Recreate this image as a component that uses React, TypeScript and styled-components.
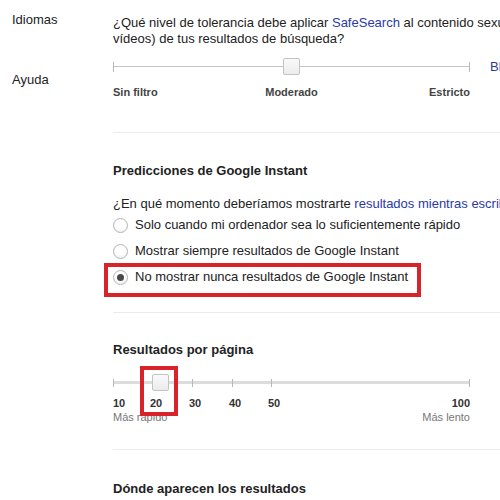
import React from "react";
import styled, { createGlobalStyle } from "styled-components";

const GlobalStyle = createGlobalStyle`
  html, body {
    margin: 0;
    padding: 0;
    background: #ffffff;
    overflow: hidden;
  }
  body {
    font-family: "Liberation Sans", Arial, sans-serif;
    font-size: 13px;
    color: #222222;
  }
`;

const Page = styled.div`
  display: flex;
  align-items: flex-start;
  width: 700px;
`;

const Nav = styled.nav`
  flex: 0 0 113px;
  box-sizing: border-box;
  padding: 12px 0 0 12px;
  display: flex;
  flex-direction: column;
  gap: 44px;
`;

const NavItem = styled.div`
  line-height: 16px;
  color: #222;
`;

const Main = styled.main`
  flex: 0 0 560px;
  display: flex;
  flex-direction: column;
`;

const Section = styled.section<{ $top: number; $bottom: number; $last?: boolean }>`
  padding-top: ${(p) => p.$top}px;
  padding-bottom: ${(p) => p.$bottom}px;
  border-bottom: ${(p) => (p.$last ? "none" : "1px solid #ebebeb")};
  display: flex;
  flex-direction: column;
`;

const Text = styled.div`
  line-height: 16px;
  white-space: nowrap;
`;

const Heading = styled.h3<{ $gap?: number }>`
  margin: 0 0 ${(p) => p.$gap ?? 0}px;
  font-size: 13px;
  font-weight: bold;
  line-height: 16px;
  color: #222;
  white-space: nowrap;
`;

const Link = styled.a`
  color: #2a3aa6;
  text-decoration: none;
`;

const SliderRow = styled.div<{ $mt: number }>`
  margin-top: ${(p) => p.$mt}px;
  display: flex;
  align-items: center;
  gap: 20px;
`;

const Track = styled.div<{ $thick?: boolean }>`
  position: relative;
  width: 357px;
  height: 17px;
  flex: 0 0 357px;
  &::before {
    content: "";
    position: absolute;
    left: 0;
    right: 0;
    top: ${(p) => (p.$thick ? 7 : 8)}px;
    height: ${(p) => (p.$thick ? 3 : 1)}px;
    background: ${(p) => (p.$thick ? "#dcdcdc" : "#c6c6c6")};
  }
`;

const Tick = styled.span<{ $tall?: boolean }>`
  position: absolute;
  width: 1px;
  height: ${(p) => (p.$tall ? 10 : 8)}px;
  top: ${(p) => (p.$tall ? 4 : 5)}px;
  background: #b8b8b8;
`;

const Handle = styled.span`
  position: absolute;
  top: 0;
  box-sizing: border-box;
  width: 17px;
  height: 17px;
  border: 1px solid #c3c3c3;
  border-radius: 2px;
  background: linear-gradient(#f9f9f9, #ececec);
`;

const SideLink = styled(Link)`
  font-size: 13px;
  line-height: 16px;
  white-space: nowrap;
`;

const LevelLabels = styled.div`
  margin-top: 11px;
  width: 357px;
  display: grid;
  grid-template-columns: 1fr auto 1fr;
  font-size: 11px;
  font-weight: bold;
  line-height: 13px;
  color: #444;
`;

const LevelLabel = styled.span<{ $align: "start" | "center" | "end" }>`
  justify-self: ${(p) => p.$align};
`;

const Options = styled.div`
  display: flex;
  flex-direction: column;
  align-items: flex-start;
`;

const OptionRow = styled.label`
  position: relative;
  display: inline-flex;
  align-items: center;
  height: 26px;
  line-height: 16px;
  white-space: nowrap;
  color: #222;
`;

const Radio = styled.span<{ $checked?: boolean }>`
  box-sizing: border-box;
  width: 15px;
  height: 15px;
  margin-right: 7px;
  border-radius: 50%;
  border: 1px solid #b5b5b5;
  background: radial-gradient(circle at 50% 35%, #ffffff 40%, #ececec 100%);
  display: flex;
  align-items: center;
  justify-content: center;
  &::after {
    content: "";
    display: ${(p) => (p.$checked ? "block" : "none")};
    width: 7px;
    height: 7px;
    border-radius: 50%;
    background: #4a4a4a;
  }
`;

/* Red annotation frame drawn over the content */
const Highlight = styled.span<{ $t: number; $b: number; $l: number; $r?: number; $w?: number }>`
  position: absolute;
  box-sizing: border-box;
  top: ${(p) => p.$t}px;
  bottom: ${(p) => p.$b}px;
  left: ${(p) => p.$l}px;
  right: ${(p) => (p.$r !== undefined ? `${p.$r}px` : "auto")};
  width: ${(p) => (p.$w !== undefined ? `${p.$w}px` : "auto")};
  border: 4px solid #d8232a;
  pointer-events: none;
  z-index: 2;
`;

const Scale = styled.div`
  position: relative;
  margin-top: 6px;
  width: 357px;
  height: 13px;
  font-size: 11px;
  font-weight: bold;
  line-height: 13px;
  color: #333;
`;

const ScaleLabel = styled.span`
  position: absolute;
  top: 0;
  white-space: nowrap;
`;

const SpeedRow = styled.div`
  margin-top: 1px;
  width: 357px;
  display: flex;
  justify-content: space-between;
  font-size: 11px;
  line-height: 13px;
  color: #777;
`;

const TRACK = 356;
const pos = (v: number) => Math.round(((v - 10) / 90) * TRACK);
const pageValues = [10, 20, 30, 40, 50, 100];

export default function App() {
  return (
    <>
      <GlobalStyle />
      <Page>
        <Nav>
          <NavItem>Idiomas</NavItem>
          <NavItem>Ayuda</NavItem>
        </Nav>
        <Main>
          <Section $top={15} $bottom={33}>
            <Text>
              ¿Qué nivel de tolerancia debe aplicar <Link>SafeSearch</Link> al contenido sexual (imágenes y
            </Text>
            <Text>vídeos) de tus resultados de búsqueda?</Text>
            <SliderRow $mt={11}>
              <Track>
                <Tick $tall style={{ left: 0 }} />
                <Tick $tall style={{ left: TRACK }} />
                <Handle style={{ left: 170 }} />
              </Track>
              <SideLink>Bloquear SafeSearch</SideLink>
            </SliderRow>
            <LevelLabels>
              <LevelLabel $align="start">Sin filtro</LevelLabel>
              <LevelLabel $align="center">Moderado</LevelLabel>
              <LevelLabel $align="end">Estricto</LevelLabel>
            </LevelLabels>
          </Section>

          <Section $top={30} $bottom={22}>
            <Heading $gap={17}>Predicciones de Google Instant</Heading>
            <Text>
              ¿En qué momento deberíamos mostrarte <Link>resultados mientras escribes</Link>?
            </Text>
            <Options>
              <OptionRow>
                <Radio />
                Solo cuando mi ordenador sea lo suficientemente rápido
              </OptionRow>
              <OptionRow>
                <Radio />
                Mostrar siempre resultados de Google Instant
              </OptionRow>
              <OptionRow>
                <Radio $checked />
                No mostrar nunca resultados de Google Instant
                <Highlight $t={-1} $r={-13} $b={-7} $l={-9} />
              </OptionRow>
            </Options>
          </Section>

          <Section $top={29} $bottom={25}>
            <Heading>Resultados por página</Heading>
            <SliderRow $mt={16}>
              <Track $thick>
                {pageValues.map((v) =>
                  v === 20 ? null : <Tick key={v} style={{ left: pos(v) }} />
                )}
                <Handle style={{ left: pos(20) - 1 }} />
                <Highlight $t={-8} $b={-25} $l={27} $w={38} />
              </Track>
            </SliderRow>
            <Scale>
              {pageValues.map((v, i) => {
                const first = i === 0;
                const last = i === pageValues.length - 1;
                const style: React.CSSProperties = first
                  ? { left: 0 }
                  : last
                  ? { right: 0 }
                  : { left: pos(v) + 3, transform: "translateX(-50%)" };
                return (
                  <ScaleLabel key={v} style={style}>
                    {v}
                  </ScaleLabel>
                );
              })}
            </Scale>
            <SpeedRow>
              <span>Más rápido</span>
              <span>Más lento</span>
            </SpeedRow>
          </Section>

          <Section $top={31} $bottom={0} $last>
            <Heading>Dónde aparecen los resultados</Heading>
          </Section>
        </Main>
      </Page>
    </>
  );
}
